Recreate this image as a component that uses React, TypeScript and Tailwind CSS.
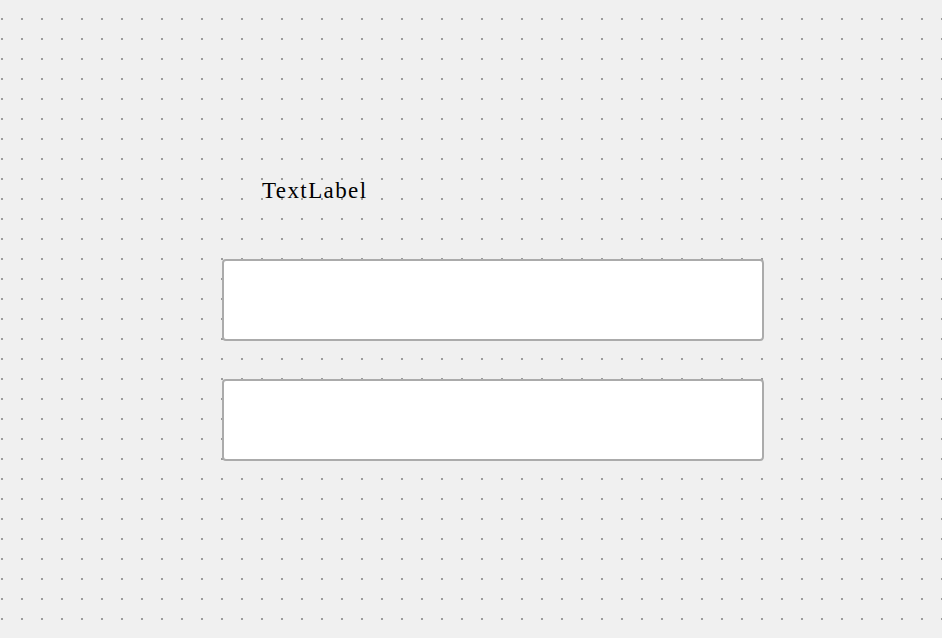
export default function App() {
  return (
    <div className="h-[638px] w-full overflow-hidden bg-[#f0f0f0] bg-[conic-gradient(at_2px_2px,transparent_75%,#9b9b9b_0)] bg-[length:20px_20px] bg-[position:1px_18px]">
      <div className="flex flex-col pl-[222px] pt-[179px]">
        {/* Label */}
        <div className="pl-[40px] font-['Liberation_Serif',serif] text-[23px] leading-[24px] tracking-[1.4px] text-black">
          TextLabel
        </div>

        {/* Line edits */}
        <div className="mt-[56px] flex flex-col gap-[38px]">
          <div className="h-[82px] w-[542px] rounded-[4px] border-2 border-[#ababab] bg-white" />
          <div className="h-[82px] w-[542px] rounded-[4px] border-2 border-[#ababab] bg-white" />
        </div>
      </div>
    </div>
  );
}
